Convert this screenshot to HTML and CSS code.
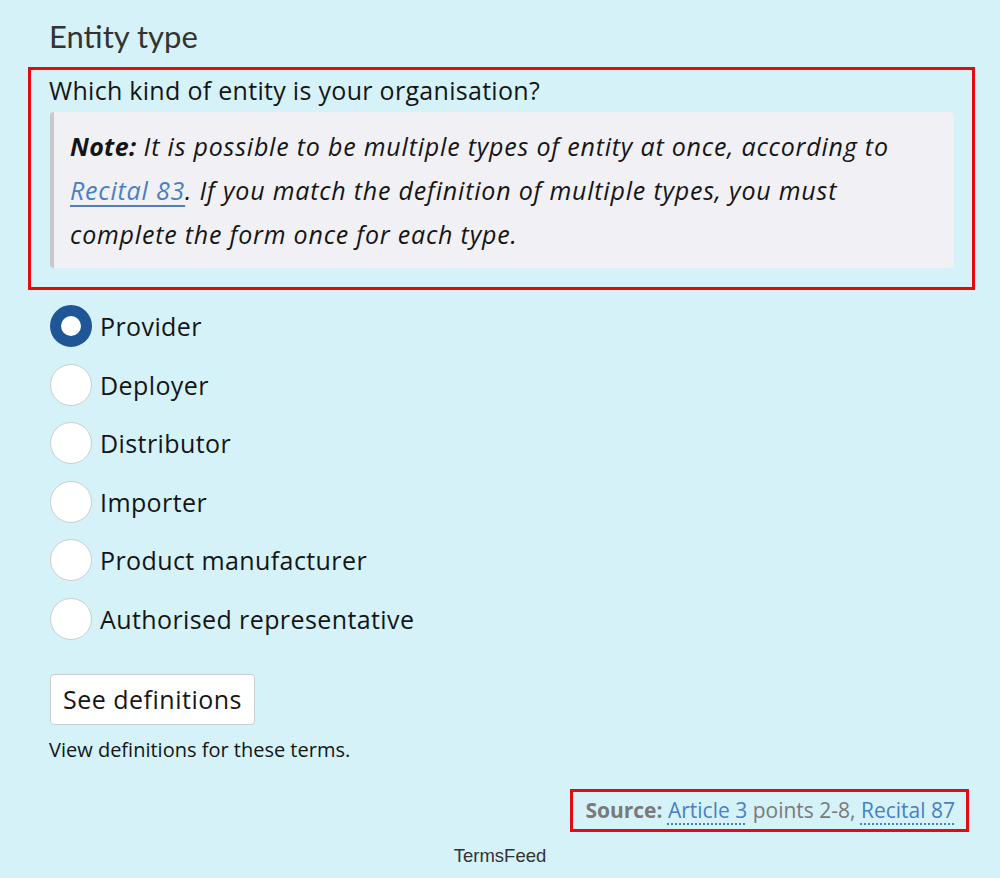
FILE: index.html
```html
<!DOCTYPE html>
<html lang="en">
<head>
<meta charset="utf-8">
<title>Entity type</title>
<link rel="stylesheet" href="styles.css">
</head>
<body>
<main class="page">
  <h2 class="title">Entity type</h2>
  <div class="question" role="group" aria-label="Entity type">
    <p class="prompt">Which kind of entity is your organisation?</p>
    <div class="note"><strong>Note:</strong> It is possible to be multiple types of entity at once, according to <a href="#" class="note-link">Recital 83</a>. If you match the definition of multiple types, you must complete the form once for each type.</div>
  </div>
  <div class="options">
    <label class="option"><span class="radio checked"></span><span class="label">Provider</span></label>
    <label class="option"><span class="radio"></span><span class="label">Deployer</span></label>
    <label class="option"><span class="radio"></span><span class="label">Distributor</span></label>
    <label class="option"><span class="radio"></span><span class="label">Importer</span></label>
    <label class="option"><span class="radio"></span><span class="label">Product manufacturer</span></label>
    <label class="option"><span class="radio"></span><span class="label">Authorised representative</span></label>
  </div>
  <button class="btn" type="button">See definitions</button>
  <p class="hint">View definitions for these terms.</p>
  <div class="source-row">
    <p class="source"><strong>Source:</strong> <a href="#" class="src-link">Article 3</a> points 2-8, <a href="#" class="src-link">Recital 87</a></p>
  </div>
  <footer class="footer">TermsFeed</footer>
</main>
</body>
</html>
```
FILE: styles.css
```css
* { box-sizing: border-box; }
html, body { margin: 0; padding: 0; }
body {
  background: #d4f2f8;
  font-family: "Open Sans", "Liberation Sans", sans-serif;
  color: #151515;
  width: 1000px;
  height: 878px;
  overflow: hidden;
}
.page {
  display: flex;
  flex-direction: column;
  align-items: flex-start;
  padding: 0 31px 0 0;
}
.title {
  margin: 16px 0 0 49px;
  font-family: Lato, "Open Sans", sans-serif;
  font-size: 31px;
  font-weight: 400;
  line-height: 40px;
  color: #333;
}
.question {
  margin: 11px 0 0 28px;
  width: 947px;
  border: 3px solid #e30b0b;
  padding: 2px 18px 19px 18px;
}
.prompt {
  margin: 0 0 4px 0;
  font-size: 25px;
  letter-spacing: 0.3px;
  line-height: 36px;
}
.note {
  margin-left: 1px;
  background: #f0f0f5;
  border-left: 4px solid #c9c9cc;
  border-radius: 4px;
  padding: 12px 20px 12px 16px;
  font-style: italic;
  font-size: 25px;
  letter-spacing: 0.8px;
  line-height: 44px;
}
.note strong { font-weight: 700; letter-spacing: 0.3px; }
.note-link {
  color: #4a7fc1;
  text-decoration: underline;
  text-underline-offset: 5px;
  text-decoration-thickness: 2px;
}
.options {
  margin: 15px 0 0 50px;
  display: flex;
  flex-direction: column;
  gap: 16.6px;
}
.option {
  display: flex;
  align-items: center;
  gap: 8px;
  height: 42px;
}
.radio {
  width: 42px;
  height: 42px;
  border-radius: 50%;
  background: #fff;
  border: 1px solid #cdcdcd;
  flex: none;
}
.radio.checked {
  border: 11px solid #1f5796;
}
.label {
  font-size: 25px;
  letter-spacing: 0.4px;
  line-height: 30px;
}
.btn {
  margin: 34px 0 0 50px;
  height: 51px;
  padding: 0 12px;
  background: #fff;
  border: 1px solid #c9ccd0;
  border-radius: 4px;
  font-family: inherit;
  font-size: 25px;
  letter-spacing: 0.5px;
  color: #151515;
}
.hint {
  margin: 12px 0 0 49px;
  font-size: 20px;
  line-height: 26px;
}
.source-row {
  align-self: flex-end;
  margin-top: 26px;
}
.source {
  margin: 0;
  border: 3px solid #e30b0b;
  padding: 5px 11px 5px 12px;
  font-size: 21px;
  line-height: 27px;
  color: #7a7a7a;
}
.source strong { font-weight: 700; }
.src-link {
  color: #4a7fc1;
  text-decoration: underline dotted;
  text-underline-offset: 6px;
  text-decoration-thickness: 2px;
}
.footer {
  align-self: center;
  margin: 14px 0 0 31px;
  font-family: "Liberation Sans", Arial, sans-serif;
  font-size: 18.5px;
  line-height: 20px;
  color: #333;
}
```
